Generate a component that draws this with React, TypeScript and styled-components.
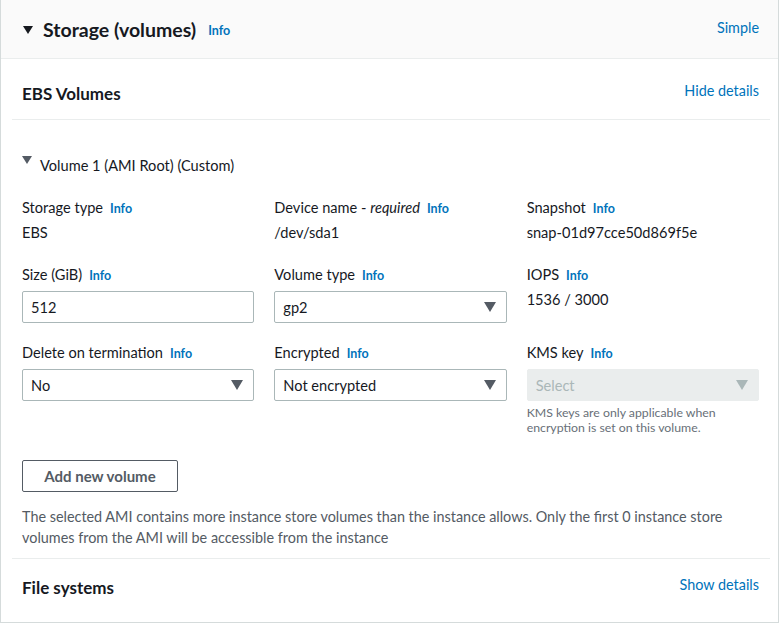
import React from "react";
import styled, { createGlobalStyle } from "styled-components";

const Global = createGlobalStyle`
  html, body { margin: 0; padding: 0; background: #fff; }
  body { font-family: Lato, "Open Sans", "Noto Sans", sans-serif; color: #16191f; }
  * { box-sizing: border-box; }
`;

const Panel = styled.div`
  width: 779px;
  border: 1px solid #d5dbdb;
  border-top: none;
  background: #fff;
`;

const Header = styled.div`
  height: 59px;
  background: #fafafa;
  border-bottom: 1px solid #eaeded;
  display: flex;
  align-items: center;
  justify-content: space-between;
  padding: 0 19px 0 22px;
`;

const TitleGroup = styled.div`
  display: flex;
  align-items: center;
  margin-top: 2px;
`;

const Caret = styled.span<{ $size: number; $color?: string }>`
  display: inline-block;
  flex: none;
  width: 0;
  height: 0;
  border-left: ${(p) => p.$size / 2}px solid transparent;
  border-right: ${(p) => p.$size / 2}px solid transparent;
  border-top: ${(p) => Math.round(p.$size * 0.8)}px solid ${(p) => p.$color || "#16191f"};
`;

const Title = styled.h2`
  margin: 0 0 0 10px;
  font-size: 19.5px;
  font-weight: 700;
  line-height: 24px;
`;

const Info = styled.a<{ $ml?: number }>`
  font-size: 12.5px;
  font-weight: 700;
  color: #0073bb;
  text-decoration: none;
  margin-left: ${(p) => p.$ml ?? 7}px;
`;

const Link = styled.a<{ $lift?: number }>`
  font-size: 14.4px;
  color: #0073bb;
  text-decoration: none;
  margin-bottom: ${(p) => (p.$lift || 0) * 2}px;
`;

const Body = styled.div`
  padding: 0 8px 0 11px;
`;

const SubHeader = styled.div<{ $h: number; $top?: number; $bottom?: number; $line?: boolean }>`
  height: ${(p) => p.$h}px;
  display: flex;
  align-items: center;
  justify-content: space-between;
  padding: ${(p) => p.$top || 0}px 11px ${(p) => p.$bottom || 0}px 10px;
  border-bottom: ${(p) => (p.$line ? "1px solid #eaeded" : "none")};
`;

const SubTitle = styled.h3`
  margin: 6px 0 0;
  font-size: 17px;
  font-weight: 700;
`;

const Section = styled.div`
  padding: 0 11px 0 10px;
  border-bottom: 1px solid #eaeded;
`;

const VolumeHead = styled.div`
  display: flex;
  align-items: flex-start;
  gap: 8px;
  margin-top: 36px;
  font-size: 14.6px;
  line-height: 20px;
`;

const Grid = styled.div`
  display: grid;
  grid-template-columns: repeat(3, 1fr);
  column-gap: 20px;
  row-gap: 20px;
  margin-top: 22px;
`;

const Field = styled.div`
  display: flex;
  flex-direction: column;
`;

const Label = styled.div`
  font-size: 14.6px;
  line-height: 20px;
  display: flex;
  align-items: baseline;
`;

const Value = styled.div`
  font-size: 14.6px;
  line-height: 20px;
  margin: 4px 0 2px;
`;

const Box = styled.div<{ $disabled?: boolean }>`
  margin-top: 5px;
  height: 32px;
  border: 1px solid ${(p) => (p.$disabled ? "#eaeded" : "#aab7b8")};
  background: ${(p) => (p.$disabled ? "#eaeded" : "#fff")};
  color: ${(p) => (p.$disabled ? "#aab7b8" : "#16191f")};
  border-radius: 2px;
  display: flex;
  align-items: center;
  justify-content: space-between;
  padding: 0 10px 0 8px;
  font-size: 14.6px;
`;

const Help = styled.div`
  margin-top: 4px;
  font-size: 12.3px;
  line-height: 15px;
  color: #687078;
`;

const Button = styled.button`
  margin-top: 25px;
  width: 156px;
  height: 32px;
  border: 1px solid #545b64;
  border-radius: 2px;
  background: #fff;
  color: #545b64;
  font-family: inherit;
  font-size: 15px;
  font-weight: 700;
  cursor: pointer;
  display: block;
`;

const Note = styled.p`
  margin: 14px 0 10px;
  font-size: 14.4px;
  line-height: 21px;
  color: #545b64;
`;

const Select = ({ value, disabled }: { value: string; disabled?: boolean }) => (
  <Box $disabled={disabled}>
    <span>{value}</span>
    <Caret $size={12} $color={disabled ? "#aab7b8" : "#545b64"} />
  </Box>
);

export default function App() {
  return (
    <>
      <Global />
      <Panel>
        <Header>
          <TitleGroup>
            <Caret $size={10} />
            <Title>Storage (volumes)</Title>
            <Info $ml={12}>Info</Info>
          </TitleGroup>
          <Link $lift={2}>Simple</Link>
        </Header>
        <Body>
          <SubHeader $h={61} $top={2} $line>
            <SubTitle>EBS Volumes</SubTitle>
            <Link>Hide details</Link>
          </SubHeader>
          <Section>
            <VolumeHead>
              <Caret $size={10} $color="#545b64" />
              <span>Volume 1 (AMI Root) (Custom)</span>
            </VolumeHead>
            <Grid>
              <Field>
                <Label>Storage type<Info>Info</Info></Label>
                <Value>EBS</Value>
              </Field>
              <Field>
                <Label>Device name -&nbsp;<i>required</i><Info>Info</Info></Label>
                <Value>/dev/sda1</Value>
              </Field>
              <Field>
                <Label>Snapshot<Info>Info</Info></Label>
                <Value>snap-01d97cce50d869f5e</Value>
              </Field>
              <Field>
                <Label>Size (GiB)<Info>Info</Info></Label>
                <Box><span>512</span></Box>
              </Field>
              <Field>
                <Label>Volume type<Info>Info</Info></Label>
                <Select value="gp2" />
              </Field>
              <Field>
                <Label>IOPS<Info>Info</Info></Label>
                <Value>1536 / 3000</Value>
              </Field>
              <Field>
                <Label>Delete on termination<Info>Info</Info></Label>
                <Select value="No" />
              </Field>
              <Field>
                <Label>Encrypted<Info>Info</Info></Label>
                <Select value="Not encrypted" />
              </Field>
              <Field>
                <Label>KMS key<Info>Info</Info></Label>
                <Select value="Select" disabled />
                <Help>KMS keys are only applicable when encryption is set on this volume.</Help>
              </Field>
            </Grid>
            <Button>Add new volume</Button>
            <Note>
              The selected AMI contains more instance store volumes than the instance allows. Only the first 0 instance store volumes from the AMI will be accessible from the instance
            </Note>
          </Section>
          <SubHeader $h={63} $bottom={12}>
            <SubTitle>File systems</SubTitle>
            <Link>Show details</Link>
          </SubHeader>
        </Body>
      </Panel>
    </>
  );
}
